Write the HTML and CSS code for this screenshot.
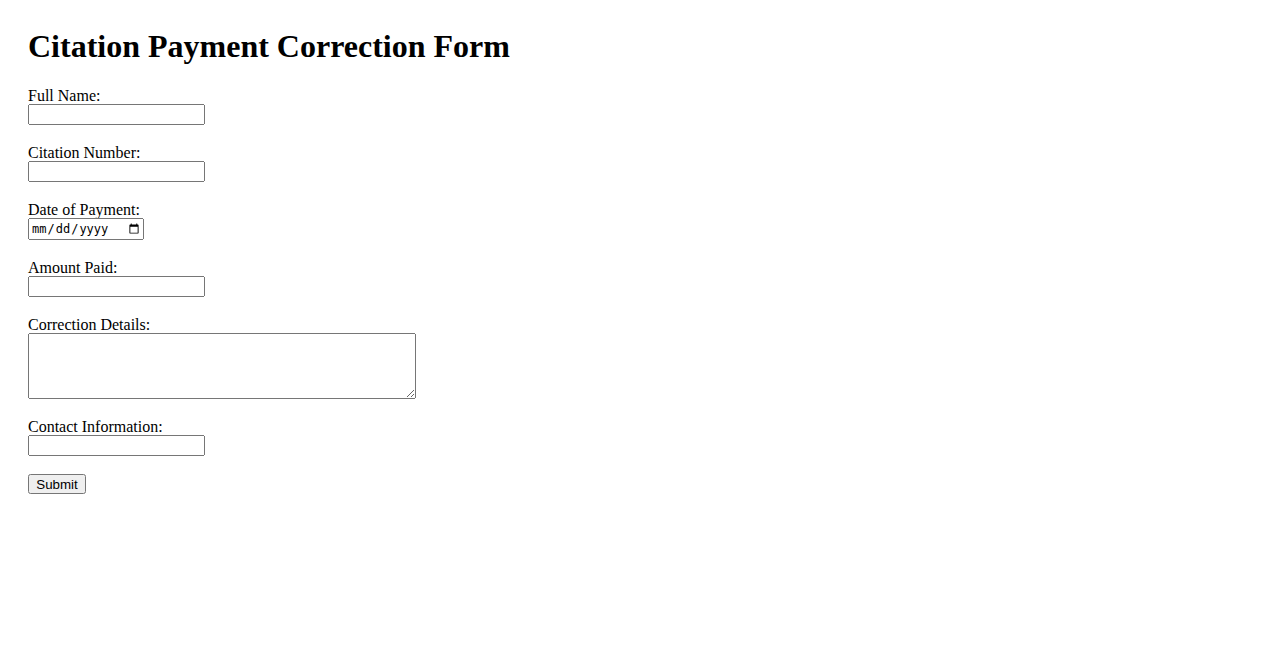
FILE: index.html
```html
<!DOCTYPE html>
<html lang="en">
<head>
<meta charset="utf-8">
<title>Citation Payment Correction Form</title>
<link rel="stylesheet" href="styles.css">
</head>
<body>
<div class="page">
  <h1 class="title">Citation Payment Correction Form</h1>
  <form class="form">
    <div class="field">
      <label class="label" for="name">Full Name:</label>
      <input class="text" type="text" id="name">
    </div>
    <div class="field">
      <label class="label" for="citation">Citation Number:</label>
      <input class="text" type="text" id="citation">
    </div>
    <div class="field">
      <label class="label" for="date">Date of Payment:</label>
      <input class="date" type="date" id="date">
    </div>
    <div class="field">
      <label class="label" for="amount">Amount Paid:</label>
      <input class="text" type="text" id="amount">
    </div>
    <div class="field">
      <label class="label" for="details">Correction Details:</label>
      <textarea class="area" id="details"></textarea>
    </div>
    <div class="field">
      <label class="label" for="contact">Contact Information:</label>
      <input class="text" type="text" id="contact">
    </div>
    <div class="field actions">
      <button class="submit" type="submit">Submit</button>
    </div>
  </form>
</div>
</body>
</html>
```

FILE: styles.css
```css
html, body {
  margin: 0;
  padding: 0;
  background: #fff;
  color: #000;
  font-family: "Liberation Serif", "Times New Roman", serif;
  font-size: 16px;
}

.page {
  padding: 28px 28px;
}

.title {
  margin: 0 0 22px 0;
  font-size: 32px;
  font-weight: bold;
  line-height: 37px;
}

.form {
  display: flex;
  flex-direction: column;
  align-items: flex-start;
  gap: 19px;
}

.field {
  display: flex;
  flex-direction: column;
  align-items: flex-start;
}

.actions {
  margin-top: -1px;
}

.label {
  display: block;
  line-height: 17px;
}

.text {
  display: block;
  margin: 0;
  width: 177px;
  height: 21px;
  box-sizing: border-box;
}

.date {
  display: block;
  margin: 0;
  width: 116px;
  height: 22px;
  box-sizing: border-box;
  font-size: 12px;
}

.area {
  display: block;
  margin: 0;
  width: 388px;
  height: 66px;
  box-sizing: border-box;
}

.submit {
  margin: 0;
  width: 58px;
  height: 20px;
  padding: 1px 6px;
  box-sizing: border-box;
}
```
